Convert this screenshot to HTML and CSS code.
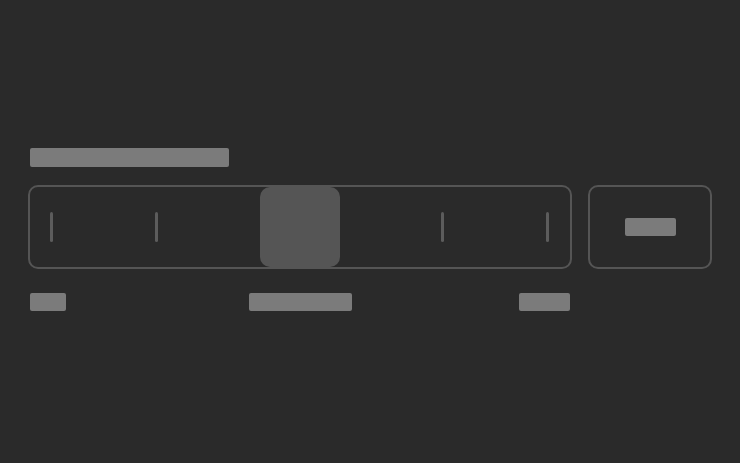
FILE: index.html
```html
<!DOCTYPE html>
<html>
<head>
<meta charset="utf-8">
<link rel="stylesheet" href="styles.css">
</head>
<body>
<div class="panel">
  <div class="title"></div>
  <div class="row">
    <div class="track">
      <div class="ticks">
        <div class="group"><span class="tick"></span><span class="tick"></span></div>
        <div class="group"><span class="tick"></span><span class="tick"></span></div>
      </div>
      <div class="thumb"></div>
    </div>
    <div class="valuebox"><div class="value"></div></div>
  </div>
  <div class="labels">
    <div class="lab lab-min"></div>
    <div class="lab lab-mid"></div>
    <div class="lab lab-max"></div>
  </div>
</div>
</body>
</html>
```

FILE: styles.css
```css
html, body {
  margin: 0;
  padding: 0;
  background: #2a2a2a;
  width: 740px;
  height: 463px;
  overflow: hidden;
  font-family: "Liberation Sans", Arial, sans-serif;
}
.panel {
  padding: 148px 0 0 28px;
  width: 684px;
  display: flex;
  flex-direction: column;
}
.title {
  margin-left: 2px;
  width: 199px;
  height: 19px;
  border-radius: 2px;
  background: #7b7b7b;
}
.row {
  margin-top: 18px;
  display: flex;
  gap: 16px;
}
.track {
  position: relative;
  box-sizing: border-box;
  width: 544px;
  height: 84px;
  border: 2px solid #555;
  border-radius: 10px;
  display: flex;
  align-items: center;
}
.ticks {
  flex: 1;
  display: flex;
  justify-content: space-between;
  padding: 0 21px 0 20px;
}
.group {
  display: flex;
  gap: 102px;
}
.tick {
  display: block;
  width: 3px;
  height: 30px;
  border-radius: 2px;
  background: #5c5c5c;
}
.thumb {
  position: absolute;
  left: 230px;
  top: 0;
  width: 80px;
  height: 80px;
  border-radius: 10px;
  background: #555;
}
.valuebox {
  box-sizing: border-box;
  width: 124px;
  height: 84px;
  border: 2px solid #555;
  border-radius: 10px;
  display: flex;
  align-items: center;
  justify-content: center;
}
.value {
  width: 51px;
  height: 18px;
  border-radius: 2px;
  background: #7b7b7b;
  margin-top: -1px;
}
.labels {
  margin-top: 24px;
  width: 544px;
  display: flex;
  justify-content: space-between;
  padding: 0 2px;
  box-sizing: border-box;
}
.lab {
  height: 18px;
  border-radius: 2px;
  background: #7b7b7b;
}
.lab-min { width: 36px; }
.lab-mid { width: 103px; margin-left: 16px; }
.lab-max { width: 51px; }
```
